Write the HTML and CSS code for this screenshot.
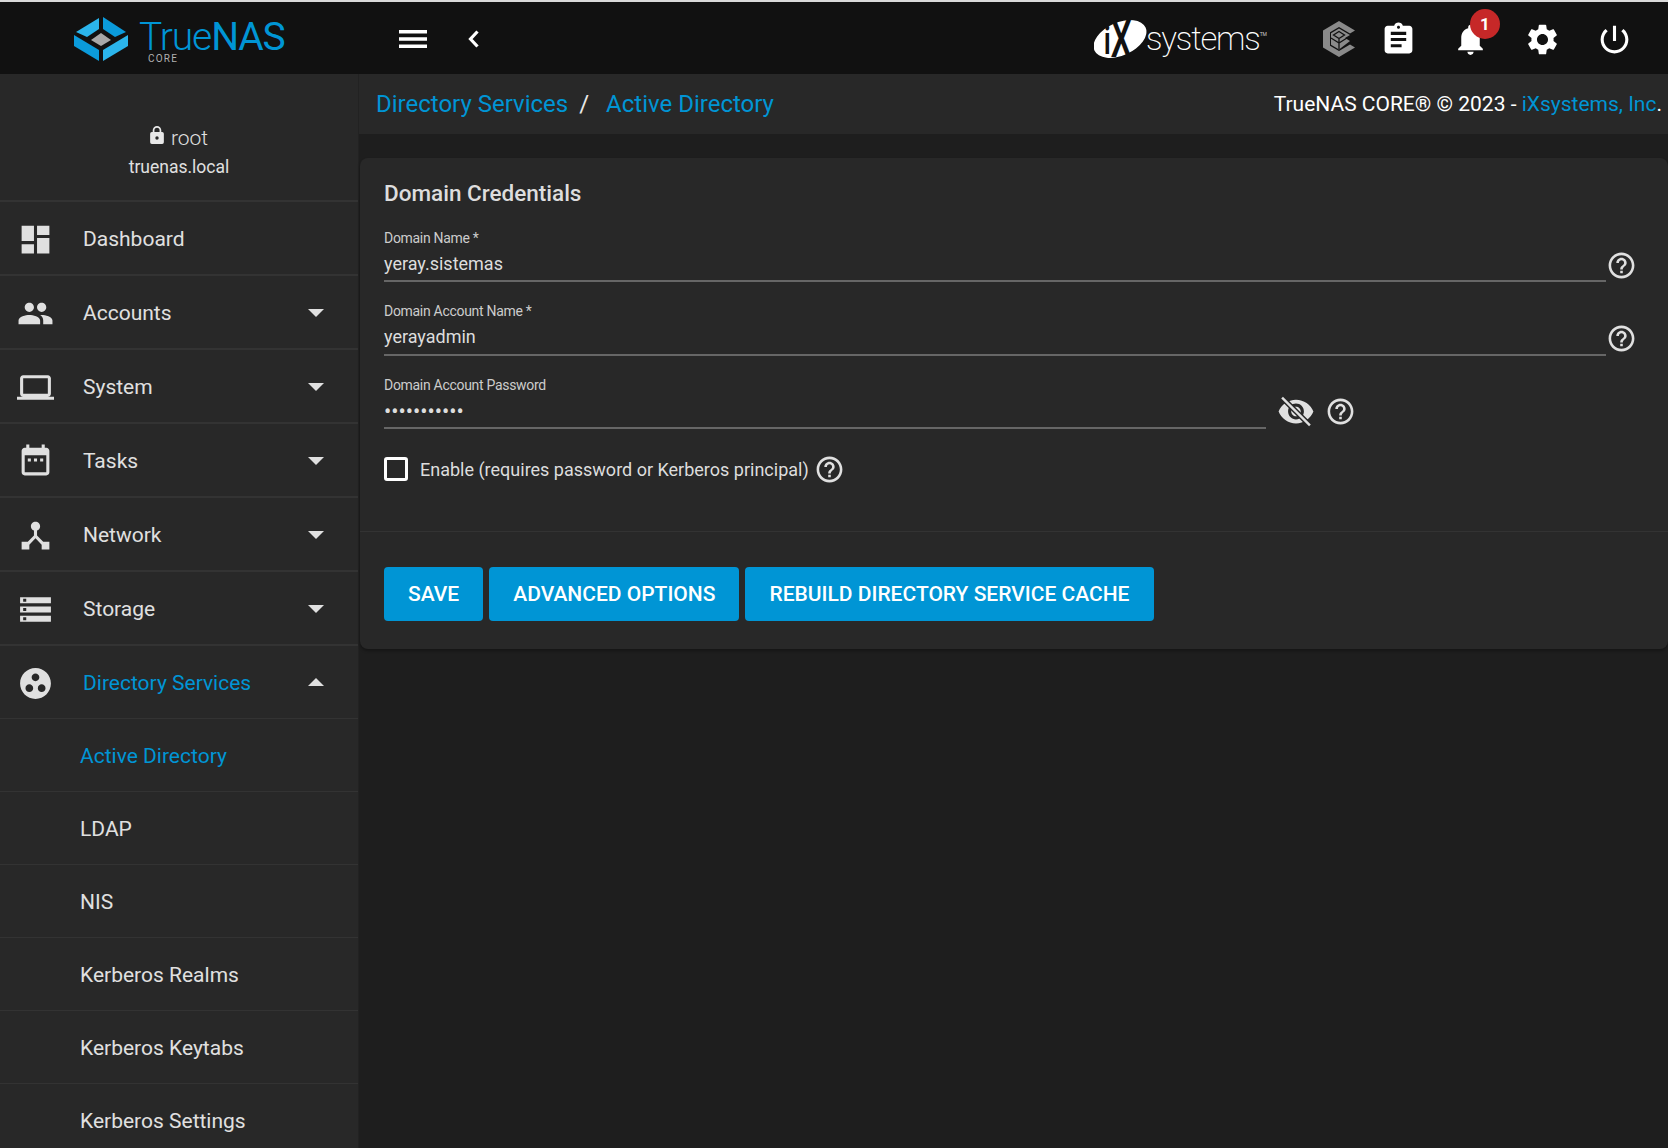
FILE: index.html
```html
<!DOCTYPE html>
<html lang="en">
<head>
  <meta charset="UTF-8">
  <title>TrueNAS - Active Directory</title>
  <link rel="stylesheet" href="styles.css">
</head>
<body>
  <!-- Top bar -->
  <header class="topbar">
    <div class="brand">
      <svg class="brand-mark" viewBox="72 14 58 48">
        <polygon points="76,31 99,17 99,28 87,36" fill="#2bb5ec"/>
        <polygon points="103,16 126,31 115,36 103,28" fill="#0b9bdb"/>
        <polygon points="74,34 99,49 99,60 74,45" fill="#0b9bdb"/>
        <polygon points="128,34 103,49 103,60 128,45" fill="#2bb5ec"/>
        <polygon points="91,39 101,32 111,39 101,45" fill="#a8a8a8"/>
      </svg>
      <div class="brand-word">
        <div class="brand-name"><span class="brand-true">True</span><span class="brand-nas">NAS</span></div>
        <div class="brand-core">CORE</div>
      </div>
    </div>
    <button class="top-btn menu-btn">
      <svg class="menu-icon" viewBox="0 0 28 18"><path d="M0 0h28v3.4H0zM0 7.3h28v3.4H0zM0 14.6h28V18H0z"/></svg>
    </button>
    <button class="top-btn back-btn">
      <svg class="back-icon" viewBox="0 0 12 18"><path d="M9.5 1.5 2.5 9l7 7.5" fill="none" stroke="#fff" stroke-width="3.2"/></svg>
    </button>

    <div class="top-right">
      <div class="vendor">
        <svg class="vendor-mark" viewBox="1094 0 53 74">
          <ellipse cx="1120" cy="37" rx="28" ry="16.5" transform="rotate(-24 1120 37)" fill="#fff"/>
          <text class="vendor-ix" transform="translate(1104 55) scale(.65 1)"><tspan class="vendor-i" dy="-3">i</tspan><tspan dy="3">X</tspan></text>
        </svg>
        <span class="vendor-name">systems</span><span class="vendor-tm">TM</span>
      </div>
      <svg class="tn-icon" viewBox="0 0 32 36">
        <path d="M16 0 32 9.500 27 12.500 16 6 7 11.300V24.700L16 30 27 23.500 32 26.500 16 36 0 26.500V9.500Z" fill="#8a8a8a"/>
        <path d="M16 7.500 27 14 22 17 27 20 16 28.500 8 23.800V12.200Z" fill="#8a8a8a"/>
        <path d="M16 10.500 21.500 14 16 17.500 10.500 14ZM8 17 16 22 24 17M16 17.500V28" fill="none" stroke="#111" stroke-width="1.3"/>
      </svg>
      <button class="top-btn icon-btn">
        <svg class="top-icon" viewBox="0 0 24 24"><path d="M19 3h-4.180C14.400 1.840 13.300 1 12 1c-1.300 0-2.400.84-2.820 2H5c-1.100 0-2 .9-2 2v14c0 1.100.9 2 2 2h14c1.100 0 2-.9 2-2V5c0-1.100-.9-2-2-2zm-7 0c.55 0 1 .45 1 1s-.45 1-1 1-1-.45-1-1 .45-1 1-1zm2 14H7v-2h7v2zm3-4H7v-2h10v2zm0-4H7V7h10v2z"/></svg>
      </button>
      <button class="top-btn icon-btn bell-btn">
        <svg class="top-icon" viewBox="0 0 24 24"><path d="M12 22c1.100 0 2-.9 2-2h-4c0 1.100.89 2 2 2zm6-6v-5c0-3.070-1.640-5.640-4.500-6.320V4c0-.83-.67-1.500-1.500-1.500s-1.500.67-1.500 1.500v.68C7.630 5.360 6 7.920 6 11v5l-2 2v1h16v-1l-2-2z"/></svg>
        <span class="badge">1</span>
      </button>
      <button class="top-btn icon-btn">
        <svg class="top-icon" viewBox="0 0 24 24"><path d="M19.140 12.940c.04-.3.06-.61.06-.94 0-.32-.02-.64-.07-.94l2.030-1.580c.18-.14.23-.41.12-.61l-1.920-3.320c-.12-.22-.37-.29-.59-.22l-2.390.96c-.5-.38-1.030-.7-1.620-.94l-.36-2.540c-.04-.24-.24-.41-.48-.41h-3.840c-.24 0-.43.17-.47.41l-.36 2.540c-.59.24-1.130.57-1.620.94l-2.390-.96c-.22-.08-.47 0-.59.22L2.740 8.870c-.12.21-.08.47.12.61l2.030 1.580c-.05.3-.09.63-.09.94s.02.64.07.94l-2.030 1.580c-.18.14-.23.41-.12.61l1.920 3.320c.12.22.37.29.59.22l2.390-.96c.5.38 1.030.7 1.620.94l.36 2.540c.05.24.24.41.48.41h3.840c.24 0 .44-.17.47-.41l.36-2.540c.59-.24 1.130-.56 1.620-.94l2.390.96c.22.08.47 0 .59-.22l1.920-3.320c.12-.22.07-.47-.12-.61l-2.010-1.580zM12 15.600c-1.980 0-3.600-1.620-3.600-3.600s1.620-3.600 3.600-3.600 3.600 1.620 3.600 3.600-1.620 3.600-3.600 3.600z"/></svg>
      </button>
      <button class="top-btn icon-btn">
        <svg class="top-icon" viewBox="0 0 24 24"><path d="M13 3h-2v10h2V3zm4.830 2.170l-1.420 1.420C17.990 7.860 19 9.810 19 12c0 3.870-3.130 7-7 7s-7-3.130-7-7c0-2.190 1.010-4.140 2.580-5.420L6.170 5.170C4.230 6.820 3 9.260 3 12c0 4.970 4.030 9 9 9s9-4.030 9-9c0-2.740-1.230-5.180-3.170-6.830z"/></svg>
      </button>
    </div>
  </header>

  <div class="layout">
    <!-- Side menu -->
    <aside class="sidebar">
      <div class="user-box">
        <div class="user-name">
          <svg class="lock-icon" viewBox="0 0 16 21"><path d="M14 7h-1V5A5 5 0 0 0 3 5v2H2a2 2 0 0 0-2 2v10a2 2 0 0 0 2 2h12a2 2 0 0 0 2-2V9a2 2 0 0 0-2-2zM8 16a2 2 0 1 1 0-4 2 2 0 0 1 0 4zm3-9H5V5a3 3 0 0 1 6 0v2z"/></svg>
          <span>root</span>
        </div>
        <div class="user-host">truenas.local</div>
      </div>

      <nav>
        <a class="nav-row">
          <svg class="nav-icon" viewBox="0 0 24 24"><path d="M3 13h8V3H3v10zm0 8h8v-6H3v6zm10 0h8V11h-8v10zm0-18v6h8V3h-8z"/></svg>
          <span class="nav-label">Dashboard</span>
        </a>
        <a class="nav-row">
          <svg class="nav-icon" viewBox="0 0 24 24"><path d="M16 11c1.660 0 2.990-1.340 2.990-3S17.660 5 16 5c-1.660 0-3 1.340-3 3s1.340 3 3 3zm-8 0c1.660 0 2.990-1.340 2.990-3S9.660 5 8 5C6.340 5 5 6.340 5 8s1.340 3 3 3zm0 2c-2.330 0-7 1.170-7 3.500V19h14v-2.500c0-2.330-4.670-3.500-7-3.500zm8 0c-.29 0-.62.02-.97.05 1.160.84 1.970 1.970 1.970 3.450V19h6v-2.500c0-2.330-4.670-3.500-7-3.500z"/></svg>
          <span class="nav-label">Accounts</span>
          <span class="caret"></span>
        </a>
        <a class="nav-row">
          <svg class="nav-icon" viewBox="0 0 24 24"><path d="M20 18c1.100 0 1.990-.9 1.990-2L22 6c0-1.100-.9-2-2-2H4c-1.100 0-2 .9-2 2v10c0 1.100.9 2 2 2H0v2h24v-2h-4zM4 6h16v10H4V6z"/></svg>
          <span class="nav-label">System</span>
          <span class="caret"></span>
        </a>
        <a class="nav-row">
          <svg class="nav-icon" viewBox="0 0 24 24"><path d="M19 3h-1V1h-2v2H8V1H6v2H5c-1.100 0-2 .9-2 2v14c0 1.100.9 2 2 2h14c1.100 0 2-.9 2-2V5c0-1.100-.9-2-2-2zm0 16H5V8h14v11zM7 10h2v2H7zm4 0h2v2h-2zm4 0h2v2h-2z"/></svg>
          <span class="nav-label">Tasks</span>
          <span class="caret"></span>
        </a>
        <a class="nav-row">
          <svg class="nav-icon" viewBox="0 0 24 24"><path d="M17 16l-4-4V8.820C14.160 8.400 15 7.300 15 6c0-1.660-1.340-3-3-3S9 4.340 9 6c0 1.300.84 2.400 2 2.820V12l-4 4H3v5h5v-3.050l4-4.200 4 4.200V21h5v-5h-4z"/></svg>
          <span class="nav-label">Network</span>
          <span class="caret"></span>
        </a>
        <a class="nav-row">
          <svg class="nav-icon" viewBox="0 0 24 24"><path d="M2 20h20v-4H2v4zm2-3h2v2H4v-2zM2 4v4h20V4H2zm4 3H4V5h2v2zm-4 7h20v-4H2v4zm2-3h2v2H4v-2z"/></svg>
          <span class="nav-label">Storage</span>
          <span class="caret"></span>
        </a>
        <a class="nav-row is-open">
          <svg class="nav-icon" viewBox="0 0 24 24"><path d="M12 2C6.480 2 2 6.480 2 12s4.480 10 10 10 10-4.480 10-10S17.520 2 12 2zM8 17.500c-1.380 0-2.500-1.120-2.500-2.500s1.120-2.500 2.500-2.500 2.500 1.120 2.500 2.500-1.120 2.500-2.500 2.500zM9.500 8c0-1.380 1.120-2.500 2.500-2.500s2.500 1.120 2.500 2.500-1.120 2.500-2.500 2.500S9.500 9.380 9.500 8zm6.500 9.500c-1.380 0-2.500-1.120-2.500-2.500s1.120-2.500 2.500-2.500 2.500 1.120 2.500 2.500-1.120 2.500-2.500 2.500z"/></svg>
          <span class="nav-label">Directory Services</span>
          <span class="caret caret-up"></span>
        </a>
        <a class="sub-row is-active">Active Directory</a>
        <a class="sub-row">LDAP</a>
        <a class="sub-row">NIS</a>
        <a class="sub-row">Kerberos Realms</a>
        <a class="sub-row">Kerberos Keytabs</a>
        <a class="sub-row">Kerberos Settings</a>
      </nav>
    </aside>

    <main class="content">
      <div class="crumbs">
        <a class="crumb">Directory Services</a>
        <span class="crumb-sep">/</span>
        <a class="crumb">Active Directory</a>
        <div class="copyright">TrueNAS CORE® © 2023 - <a class="crumb-link">iXsystems, Inc</a>.</div>
      </div>

      <section class="card">
        <div class="card-body">
          <h2 class="card-title">Domain Credentials</h2>

          <div class="field-row">
            <div class="field">
              <label class="field-label">Domain Name *</label>
              <div class="field-value">yeray.sistemas</div>
            </div>
            <svg class="help-icon" viewBox="0 0 24 24"><use href="#help"/></svg>
          </div>

          <div class="field-row field-row-tall">
            <div class="field">
              <label class="field-label">Domain Account Name *</label>
              <div class="field-value">yerayadmin</div>
            </div>
            <svg class="help-icon" viewBox="0 0 24 24"><use href="#help"/></svg>
          </div>

          <div class="field-row">
            <div class="field field-password">
              <label class="field-label">Domain Account Password</label>
              <div class="field-value dots">•••••••••••</div>
            </div>
            <svg class="eye-icon" viewBox="0 2.250 24 19.500">
              <path d="M12 4.500C7 4.500 2.730 7.610 1 12c1.730 4.390 6 7.500 11 7.500s9.270-3.110 11-7.500c-1.730-4.390-6-7.500-11-7.500zM12 17c-2.760 0-5-2.240-5-5s2.240-5 5-5 5 2.240 5 5-2.240 5-5 5zm0-8c-1.660 0-3 1.340-3 3s1.340 3 3 3 3-1.340 3-3-1.340-3-3-3z"/>
              <path d="M4 4l16 16" stroke="#282828" stroke-width="3.400"/>
              <path d="M3.200 3.200 20.800 20.800" stroke="#e0e0e0" stroke-width="1.500"/>
            </svg>
            <svg class="help-icon" viewBox="0 0 24 24"><use href="#help"/></svg>
          </div>

          <div class="check-row">
            <span class="checkbox"></span>
            <span class="check-label">Enable (requires password or Kerberos principal)</span>
            <svg class="help-icon" viewBox="0 0 24 24"><use href="#help"/></svg>
          </div>
        </div>

        <div class="card-actions">
          <button class="btn">SAVE</button>
          <button class="btn">ADVANCED OPTIONS</button>
          <button class="btn">REBUILD DIRECTORY SERVICE CACHE</button>
        </div>
      </section>
    </main>
  </div>

  <svg class="icon-defs">
    <symbol id="help" viewBox="0 0 24 24">
      <path d="M11 18h2v-2h-2v2zm1-16C6.480 2 2 6.480 2 12s4.480 10 10 10 10-4.480 10-10S17.520 2 12 2zm0 18c-4.410 0-8-3.590-8-8s3.590-8 8-8 8 3.590 8 8-3.590 8-8 8zm0-14c-2.210 0-4 1.790-4 4h2c0-1.100.9-2 2-2s2 .9 2 2c0 2-3 1.750-3 5h2c0-2.250 3-2.500 3-5 0-2.210-1.790-4-4-4z"/>
    </symbol>
  </svg>
</body>
</html>
```

FILE: styles.css
```css
* {
  margin: 0;
  padding: 0;
  box-sizing: border-box;
}
html, body {
  height: 100%;
  overflow: hidden;
}
body {
  font-family: Roboto, "Liberation Sans", sans-serif;
  background-color: #1e1e1e;
  color: #e0e0e0;
}
button {
  font-family: inherit;
  border: none;
  background: none;
}

/* Top bar */
.topbar {
  height: 74px;
  padding-top: 2px;
  border-top: 2px solid #d9d9d9;
  background-color: #111;
  display: flex;
  align-items: center;
}
.brand {
  width: 359px;
  padding-left: 72px;
  display: flex;
  align-items: center;
  gap: 9px;
}
.brand-mark {
  width: 58px;
  height: 48px;
}
.brand-word {
  color: #0095d5;
}
.brand-name {
  font-size: 39px;
  line-height: 36px;
  letter-spacing: -1.1px;
}
.brand-true {
  font-weight: 300;
}
.brand-nas {
  font-weight: 400;
}
.brand-core {
  font-size: 10px;
  line-height: 8px;
  margin: 0 0 -4px 9px;
  letter-spacing: 1.2px;
  color: #b0b0b0;
}
.top-btn {
  display: flex;
  align-items: center;
  justify-content: center;
  position: relative;
}
.menu-btn {
  margin-left: 40px;
}
.menu-icon {
  width: 28px;
  height: 18px;
  fill: #fff;
}
.back-btn {
  margin-left: 41px;
}
.back-icon {
  width: 12px;
  height: 18px;
}
.top-right {
  margin-left: auto;
  padding-right: 35px;
  display: flex;
  align-items: center;
}
.vendor {
  display: flex;
  align-items: center;
  margin-right: 56px;
}
.vendor-mark {
  width: 53px;
  height: 74px;
  margin: -18px 0;
}
.vendor-ix {
  font-family: Roboto, sans-serif;
  font-size: 52px;
  font-weight: 500;
  fill: #111;
}
.vendor-i {
  font-size: 38px;
  font-weight: 700;
}
.vendor-name {
  font-size: 33px;
  font-weight: 200;
  line-height: 36px;
  margin-left: -1px;
  letter-spacing: -1.2px;
  color: #fff;
}
.vendor-tm {
  font-size: 5px;
  color: #ccc;
  margin-bottom: 10px;
}
.tn-icon {
  width: 32px;
  height: 36px;
  margin-right: 25px;
}
.icon-btn {
  width: 37px;
  height: 37px;
}
.icon-btn + .icon-btn {
  margin-left: 35px;
}
.top-icon {
  width: 37px;
  height: 37px;
  fill: #fff;
}
.badge {
  position: absolute;
  top: -12px;
  right: -11px;
  width: 30px;
  height: 30px;
  border-radius: 50%;
  background-color: #c62828;
  color: #fff;
  font-size: 17px;
  font-weight: 700;
  line-height: 30px;
  text-align: center;
}

/* Layout */
.layout {
  display: flex;
  height: calc(100% - 74px);
}

/* Side menu */
.sidebar {
  width: 359px;
  flex-shrink: 0;
  background-color: #282828;
  border-right: 1px solid #222;
  overflow: hidden;
}
.user-box {
  height: 128px;
  padding-top: 50px;
  border-bottom: 2px solid #333;
  text-align: center;
}
.user-name {
  display: flex;
  justify-content: center;
  align-items: center;
  gap: 7px;
  height: 28px;
  font-size: 21px;
  font-weight: 300;
}
.lock-icon {
  width: 14px;
  height: 18px;
  fill: #e8e8e8;
  margin-top: -6px;
}
.user-host {
  margin-top: 1px;
  font-size: 17.500px;
  line-height: 28px;
}
.nav-row {
  height: 74px;
  padding: 2px 34px 0 17px;
  display: flex;
  align-items: center;
  border-bottom: 2px solid #333;
  font-size: 21px;
}
.nav-icon {
  width: 37px;
  height: 37px;
  fill: #e0e0e0;
  flex-shrink: 0;
}
.nav-label {
  margin-left: 29px;
  flex: 1;
}
.caret {
  width: 0;
  height: 0;
  border-left: 8px solid transparent;
  border-right: 8px solid transparent;
  border-top: 8px solid #e0e0e0;
}
.caret-up {
  border-top: none;
  border-bottom: 8px solid #e0e0e0;
  margin-bottom: 2px;
}
.is-open {
  height: 73px;
  border-bottom: 1px solid #333;
}
.is-open .nav-label {
  color: #0095d5;
}
.sub-row {
  display: flex;
  align-items: center;
  height: 73px;
  padding: 2px 0 0 80px;
  font-size: 21px;
  border-bottom: 1px solid #333;
}
.is-active {
  color: #0095d5;
}

/* Main area */
.content {
  flex: 1;
  min-width: 0;
}
.crumbs {
  height: 60px;
  padding: 0 6px 0 17px;
  display: flex;
  align-items: center;
  background-color: #282828;
}
.crumb {
  font-size: 24px;
  color: #0095d5;
}
.crumb-sep {
  font-size: 24px;
  margin: 0 17px 0 11px;
  color: #e8e8e8;
}
.copyright {
  margin-left: auto;
  font-size: 21px;
  color: #fff;
}
.crumb-link {
  color: #0095d5;
}
.card {
  margin: 24px 0 0 1px;
  background-color: #282828;
  border-radius: 8px;
  box-shadow: 0 2px 3px rgba(0, 0, 0, 0.3);
}
.card-body {
  padding: 21px 31px 42px 24px;
  border-bottom: 1px solid #333;
}
.card-title {
  font-size: 22.500px;
  line-height: 28px;
  font-weight: 500;
  color: #ddd;
  margin-bottom: 22px;
}
.field-row {
  display: flex;
  align-items: flex-end;
  margin-bottom: 20px;
}
.field {
  flex: 1;
  border-bottom: 2px solid #666;
}
.field-password {
  flex: none;
  width: 882px;
}
.field-label {
  display: block;
  font-size: 14px;
  line-height: 18px;
  letter-spacing: -0.3px;
  color: #ccc;
}
.field-value {
  margin-top: 5px;
  margin-bottom: 4px;
  font-size: 18px;
  line-height: 24px;
  color: #ddd;
}
.field-row-tall .field-value {
  margin-bottom: 5px;
}
.field-row-tall .help-icon {
  margin-bottom: 2px;
}
.dots {
  margin-top: 6px;
  margin-bottom: 3px;
  font-size: 21.500px;
  letter-spacing: 0;
}
.help-icon {
  width: 31px;
  height: 31px;
  fill: #e0e0e0;
  flex-shrink: 0;
  margin-bottom: 1px;
}
.eye-icon {
  width: 38px;
  height: 31px;
  margin: 0 10px 2px 11px;
  fill: #e0e0e0;
  flex-shrink: 0;
}
.eye-icon + .help-icon {
  margin-bottom: 2px;
}
.check-row {
  display: flex;
  align-items: center;
  height: 40px;
}
.checkbox {
  width: 24px;
  height: 24px;
  border: 3px solid #fff;
  border-radius: 3px;
}
.check-label {
  margin-left: 12px;
  margin-right: 5px;
  font-size: 18px;
  color: #ddd;
}
.check-row .help-icon {
  margin-bottom: 0;
}
.card-actions {
  padding: 35px 24px 28px;
  display: flex;
  gap: 6px;
}
.btn {
  height: 54px;
  padding: 0 24px;
  font-size: 21px;
  font-weight: 500;
  color: #fff;
  background-color: #0095d5;
  border-radius: 4px;
}
.icon-defs {
  display: none;
}
```
